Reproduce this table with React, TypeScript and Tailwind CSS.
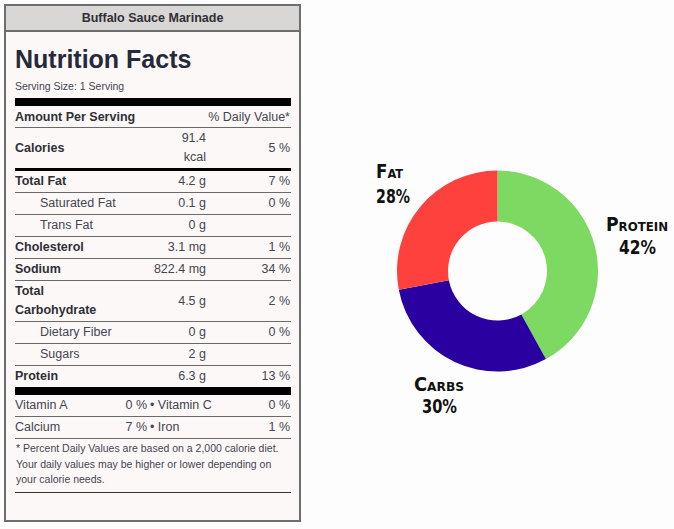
import React from "react";

type RowProps = {
  name: React.ReactNode;
  amount?: React.ReactNode;
  pct?: string;
  bold?: boolean;
  indent?: boolean;
  border?: "thin" | "thick" | "none";
};

function Row({ name, amount, pct, bold, indent, border = "thin" }: RowProps) {
  const borderCls =
    border === "thin"
      ? "border-b border-[#6a6a6a]"
      : border === "thick"
      ? "border-b-[3px] border-black"
      : "";
  return (
    <div className={`grid grid-cols-[110px_81px_1fr] items-center py-px leading-[19px] ${borderCls}`}>
      <div className={`${bold ? "font-bold text-[#2f2f35]" : "text-[#454550]"} ${indent ? "pl-[25px]" : ""}`}>{name}</div>
      <div className="text-right text-[#454550]">{amount}</div>
      <div className="text-right pr-px text-[#454550]">{pct}</div>
    </div>
  );
}

function VitRow({ a, av, b, bv }: { a: string; av: string; b: string; bv: string }) {
  return (
    <div className="grid grid-cols-[132px_1fr_auto] items-center py-px leading-[19px] border-b border-[#6a6a6a] text-[#454550]">
      <div className="flex justify-between">
        <span>{a}</span>
        <span>{av}</span>
      </div>
      <div className="pl-[3px]">• {b}</div>
      <div className="pr-px">{bv}</div>
    </div>
  );
}

function pt(cx: number, cy: number, r: number, deg: number) {
  const a = (deg * Math.PI) / 180;
  return [cx + r * Math.sin(a), cy - r * Math.cos(a)];
}

function slice(cx: number, cy: number, R: number, r: number, a0: number, a1: number) {
  const [x0, y0] = pt(cx, cy, R, a0);
  const [x1, y1] = pt(cx, cy, R, a1);
  const [x2, y2] = pt(cx, cy, r, a1);
  const [x3, y3] = pt(cx, cy, r, a0);
  const large = a1 - a0 > 180 ? 1 : 0;
  return `M${x0} ${y0} A${R} ${R} 0 ${large} 1 ${x1} ${y1} L${x2} ${y2} A${r} ${r} 0 ${large} 0 ${x3} ${y3} Z`;
}

function Label({ x, y, w, children }: { x: number; y: number; w: number; children: string }) {
  return (
    <text x={x} y={y} textLength={w} lengthAdjust="spacingAndGlyphs">
      {children}
    </text>
  );
}

function Donut() {
  const cx = 137.5;
  const cy = 121;
  const R = 100.5;
  const r = 49.5;
  const a1 = 0.42 * 360;
  const a2 = 0.72 * 360;
  return (
    <svg width="314" height="280" viewBox="0 0 314 280" className="ml-[59px] mt-[146px] shrink-0">
      <path d={slice(cx, cy, R, r, 0, a1)} fill="#7ed962" />
      <path d={slice(cx, cy, R, r, a1, a2)} fill="#2a00a1" />
      <path d={slice(cx, cy, R, r, a2, 360)} fill="#ff413e" />
      <g
        className="[font-family:'DejaVu_Sans_Condensed','DejaVu_Sans',sans-serif] font-bold [font-variant:small-caps] text-[19px]"
        fill="#111"
      >
        <Label x={16} y={28} w={27}>Fat</Label>
        <Label x={16} y={53} w={34}>28%</Label>
        <Label x={246} y={81} w={62}>Protein</Label>
        <Label x={259} y={104} w={37}>42%</Label>
        <Label x={54} y={241} w={50}>Carbs</Label>
        <Label x={62} y={263} w={35}>30%</Label>
      </g>
    </svg>
  );
}

export default function App() {
  return (
    <div className="min-h-[529px] w-[674px] bg-[#fefdfd] flex items-start pl-[4px] pt-[4px] [font-family:'Liberation_Sans',Arial,sans-serif]">
      <div className="w-[297px] h-[518px] shrink-0 border-2 border-[#6e6e6e] bg-[#fcf8f8] flex flex-col">
        <div className="h-[26px] shrink-0 bg-[#d9d6d6] border-b-2 border-[#6e6e6e] flex items-center justify-center text-[12.5px] font-bold text-[#2f2f35]">
          Buffalo Sauce Marinade
        </div>
        <div className="pl-[9px] pr-[8px] pt-[12px] text-[12.5px]">
          <div className="text-[25px] font-bold leading-[30px] text-[#262a38]">Nutrition Facts</div>
          <div className="mt-[4px] text-[10.5px] leading-[16px] text-[#454550]">Serving Size: 1 Serving</div>
          <div className="mt-[4px] h-[8px] bg-black" />
          <div className="flex justify-between pt-[2px] leading-[19px] border-b border-[#6a6a6a]">
            <span className="font-bold text-[#2f2f35]">Amount Per Serving</span>
            <span className="pr-px text-[#454550]">% Daily Value*</span>
          </div>
          <Row
            name="Calories"
            bold
            amount={
              <>
                91.4
                <br />
                kcal
              </>
            }
            pct="5 %"
            border="thick"
          />
          <Row name="Total Fat" bold amount="4.2 g" pct="7 %" />
          <Row name="Saturated Fat" indent amount="0.1 g" pct="0 %" />
          <Row name="Trans Fat" indent amount="0 g" />
          <Row name="Cholesterol" bold amount="3.1 mg" pct="1 %" />
          <Row name="Sodium" bold amount="822.4 mg" pct="34 %" />
          <Row
            name={
              <>
                Total
                <br />
                Carbohydrate
              </>
            }
            bold
            amount="4.5 g"
            pct="2 %"
          />
          <Row name="Dietary Fiber" indent amount="0 g" pct="0 %" />
          <Row name="Sugars" indent amount="2 g" />
          <Row name="Protein" bold amount="6.3 g" pct="13 %" border="none" />
          <div className="h-[8px] bg-black" />
          <VitRow a="Vitamin A" av="0 %" b="Vitamin C" bv="0 %" />
          <VitRow a="Calcium" av="7 %" b="Iron" bv="1 %" />
          <div className="pt-[2px] pb-[4px] pl-px text-[10.5px] leading-[15.5px] text-[#454550] border-b border-[#333]">
            * Percent Daily Values are based on a 2,000 calorie diet.
            <br />
            Your daily values may be higher or lower depending on
            <br />
            your calorie needs.
          </div>
        </div>
      </div>
      <Donut />
    </div>
  );
}
